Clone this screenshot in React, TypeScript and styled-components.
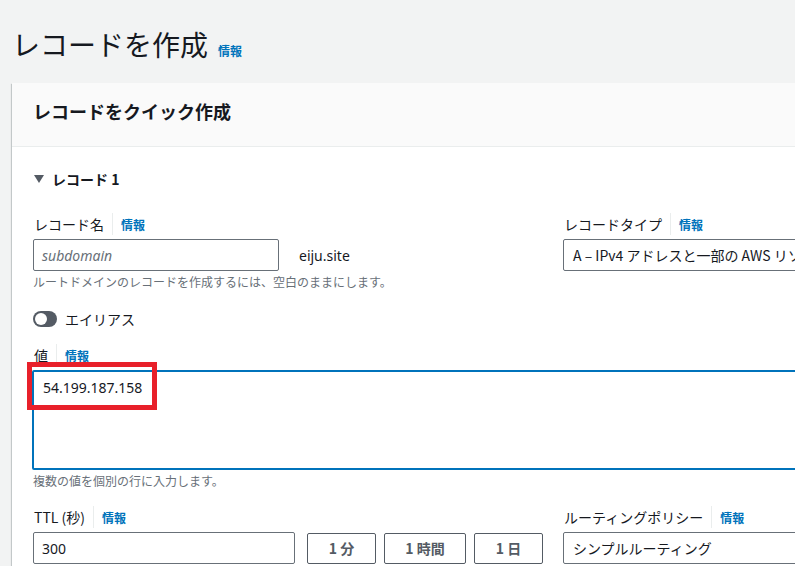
import React from 'react';
import styled, { createGlobalStyle } from 'styled-components';

const GlobalStyle = createGlobalStyle`
  html, body {
    margin: 0;
    padding: 0;
    background: #f2f3f3;
    overflow: hidden;
  }
  body {
    font-family: "Noto Sans", "Noto Sans CJK JP", sans-serif;
    color: #16191f;
  }
`;

const Page = styled.div`
  width: 1120px;
  padding: 26px 12px 0 12px;
`;

const TitleRow = styled.div`
  display: flex;
  align-items: baseline;
  gap: 10px;
  margin-bottom: 21px;
`;

const Title = styled.h1`
  margin: 0;
  font-size: 28px;
  line-height: 36px;
  font-weight: 400;
  font-family: "Noto Sans CJK JP", sans-serif;
  color: #16191f;
`;

const InfoLink = styled.a`
  font-size: 12px;
  font-weight: 700;
  color: #0073bb;
  text-decoration: none;
  font-family: "Noto Sans CJK JP", sans-serif;
`;

const Card = styled.section`
  background: #ffffff;
  box-shadow: 0 1px 1px 0 rgba(0, 28, 36, 0.3), 1px 1px 1px 0 rgba(0, 28, 36, 0.15),
    -1px 1px 1px 0 rgba(0, 28, 36, 0.15);
`;

const CardHeader = styled.header`
  background: #fafafa;
  border-bottom: 1px solid #eaeded;
  padding: 14px 20px 21px 21px;
`;

const CardTitle = styled.h2`
  margin: 0;
  font-size: 18px;
  line-height: 28px;
  font-weight: 700;
  font-family: "Noto Sans CJK JP", sans-serif;
`;

const CardBody = styled.div`
  padding: 22px 20px 20px 21px;
`;

const SectionToggle = styled.div`
  display: flex;
  align-items: center;
  gap: 8px;
  font-size: 14px;
  line-height: 20px;
  font-weight: 700;
  font-family: "Noto Sans CJK JP", sans-serif;
  margin-bottom: 25px;
  padding-left: 1px;
`;

const Grid = styled.div`
  display: grid;
  grid-template-columns: 510px 510px;
  column-gap: 20px;
`;

const Field = styled.div`
  display: flex;
  flex-direction: column;
`;

const LabelRow = styled.div`
  display: flex;
  align-items: center;
  height: 20px;
  margin-bottom: 5px;
  font-size: 14px;
  font-family: "Noto Sans CJK JP", sans-serif;
  padding-left: 1px;
`;

const Divider = styled.span`
  width: 1px;
  height: 22px;
  background: #eaeded;
  margin: 0 8px;
`;

const InputRow = styled.div`
  display: flex;
  align-items: center;
  gap: 20px;
`;

const TextInput = styled.div<{ $w: number; $placeholder?: boolean }>`
  box-sizing: border-box;
  width: ${({ $w }) => $w}px;
  height: 32px;
  border: 1px solid #687078;
  border-radius: 2px;
  padding: 0 8px;
  display: flex;
  align-items: center;
  font-size: 14px;
  font-style: ${({ $placeholder }) => ($placeholder ? 'italic' : 'normal')};
  color: ${({ $placeholder }) => ($placeholder ? '#687078' : '#16191f')};
  background: #fff;
`;

const Select = styled(TextInput)`
  width: 100%;
  padding: 0 9px;
  white-space: nowrap;
  overflow: hidden;
  font-family: "Noto Sans CJK JP", sans-serif;
`;

const Suffix = styled.span`
  font-size: 14px;
`;

const Help = styled.div`
  margin-top: 3px;
  font-size: 12px;
  line-height: 16px;
  color: #687078;
  font-family: "Noto Sans CJK JP", sans-serif;
`;

const ToggleRow = styled.div`
  display: flex;
  align-items: center;
  gap: 8px;
  height: 20px;
  margin: 19px 0 16px 0;
  font-size: 14px;
  font-family: "Noto Sans CJK JP", sans-serif;
`;

const Track = styled.span`
  position: relative;
  width: 24px;
  height: 16px;
  border-radius: 8px;
  background: #545b64;
`;

const Knob = styled.span`
  position: absolute;
  left: 2px;
  top: 2px;
  width: 12px;
  height: 12px;
  border-radius: 50%;
  background: #fff;
`;

const ValueWrap = styled.div`
  position: relative;
  margin-bottom: 18px;
`;

const TextArea = styled.div`
  box-sizing: border-box;
  width: 100%;
  height: 100px;
  border: 2px solid #0073bb;
  border-radius: 2px;
  padding: 6px 9px;
  font-size: 14px;
  line-height: 20px;
  margin-left: -1px;
`;

const Highlight = styled.div`
  position: absolute;
  left: -6px;
  top: -8px;
  width: 130px;
  height: 48px;
  box-sizing: border-box;
  border: 5px solid #e8202a;
  pointer-events: none;
`;

const ButtonRow = styled.div`
  display: flex;
  gap: 8px;
  align-items: center;
`;

const Button = styled.button<{ $w: number }>`
  box-sizing: border-box;
  width: ${({ $w }) => $w}px;
  height: 31px;
  border: 1px solid #545b64;
  border-radius: 2px;
  background: #fff;
  color: #545b64;
  font-size: 14px;
  font-weight: 700;
  font-family: "Noto Sans CJK JP", sans-serif;
  padding: 0;
`;

const TtlRow = styled.div`
  display: flex;
  gap: 12px;
  align-items: center;
`;

function Label({ text }: { text: string }) {
  return (
    <LabelRow>
      <span>{text}</span>
      <Divider />
      <InfoLink href="#">情報</InfoLink>
    </LabelRow>
  );
}

export default function App() {
  return (
    <>
      <GlobalStyle />
      <Page>
        <TitleRow>
          <Title>レコードを作成</Title>
          <InfoLink href="#">情報</InfoLink>
        </TitleRow>
        <Card>
          <CardHeader>
            <CardTitle>レコードをクイック作成</CardTitle>
          </CardHeader>
          <CardBody>
            <SectionToggle>
              <svg width="10" height="8" viewBox="0 0 10 8">
                <path d="M0 0 L10 0 L5 8 Z" fill="#545b64" />
              </svg>
              <span>レコード 1</span>
            </SectionToggle>
            <Grid>
              <Field>
                <Label text="レコード名" />
                <InputRow>
                  <TextInput $w={246} $placeholder>
                    subdomain
                  </TextInput>
                  <Suffix>eiju.site</Suffix>
                </InputRow>
                <Help>ルートドメインのレコードを作成するには、空白のままにします。</Help>
              </Field>
              <Field>
                <Label text="レコードタイプ" />
                <Select $w={510}>
                  A – IPv4 アドレスと一部の AWS リソースにトラフィックをルーティングします
                </Select>
              </Field>
            </Grid>
            <ToggleRow>
              <Track>
                <Knob />
              </Track>
              <span>エイリアス</span>
            </ToggleRow>
            <Field>
              <Label text="値" />
              <ValueWrap>
                <TextArea>54.199.187.158</TextArea>
                <Highlight />
                <Help>複数の値を個別の行に入力します。</Help>
              </ValueWrap>
            </Field>
            <Grid>
              <Field>
                <Label text="TTL (秒)" />
                <TtlRow>
                  <TextInput $w={263}>300</TextInput>
                  <ButtonRow>
                    <Button $w={69}>1 分</Button>
                    <Button $w={82}>1 時間</Button>
                    <Button $w={69}>1 日</Button>
                  </ButtonRow>
                </TtlRow>
              </Field>
              <Field>
                <Label text="ルーティングポリシー" />
                <Select $w={510}>シンプルルーティング</Select>
              </Field>
            </Grid>
          </CardBody>
        </Card>
      </Page>
    </>
  );
}
